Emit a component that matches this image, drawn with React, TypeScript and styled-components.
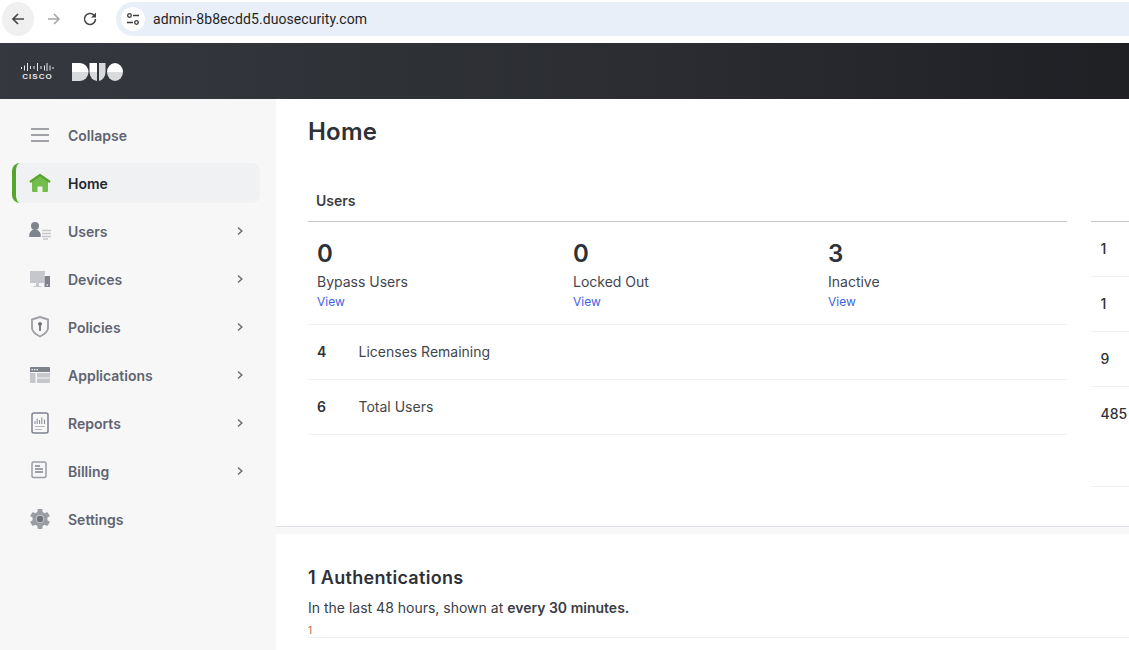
import React from "react";
import styled, { createGlobalStyle } from "styled-components";

const Global = createGlobalStyle`
  html, body { margin: 0; padding: 0; background: #fff; overflow: hidden; }
  body { font-family: Inter, "Liberation Sans", sans-serif; color: #2e3138; }
  * { box-sizing: border-box; }
`;

const Page = styled.div`
  width: 1129px;
  height: 650px;
  overflow: hidden;
  display: flex;
  flex-direction: column;
`;

const BrowserBar = styled.div`
  height: 43px;
  flex: none;
  display: flex;
  align-items: flex-start;
  padding: 2px 0 0 2px;
  background: #fff;
`;
const NavButton = styled.div<{ $active?: boolean }>`
  width: 32px;
  height: 34px;
  flex: none;
  margin-right: 4px;
  border-radius: 50%;
  display: flex;
  align-items: center;
  justify-content: center;
  background: ${(p) => (p.$active ? "#f0f0f1" : "transparent")};
`;
const UrlBar = styled.div`
  flex: 1;
  height: 34px;
  margin-left: 6px;
  border-radius: 17px 0 0 17px;
  background: #e9eff9;
  display: flex;
  align-items: center;
  padding-left: 5px;
`;
const TuneBadge = styled.div`
  width: 24px;
  height: 24px;
  border-radius: 50%;
  background: #fff;
  display: flex;
  align-items: center;
  justify-content: center;
`;
const UrlText = styled.span`
  margin-left: 8px;
  font: 14px "Roboto", "Liberation Sans", sans-serif;
  letter-spacing: 0.08px;
  color: #1f1f1f;
`;

const Header = styled.header`
  height: 56px;
  flex: none;
  background: linear-gradient(90deg, #35383e 0%, #2a2c31 60%, #1e2024 100%);
  display: flex;
  align-items: center;
  padding: 2px 0 0 21px;
  gap: 18px;
`;

const Body = styled.div`
  flex: 1;
  min-height: 0;
  display: flex;
`;

const Sidebar = styled.nav`
  width: 276px;
  flex: none;
  background: #f7f7f8;
  padding: 16px 16px 0 12px;
  display: flex;
  flex-direction: column;
`;
const NavItem = styled.div<{ $active?: boolean }>`
  height: 40px;
  flex: none;
  margin-bottom: 8px;
  display: flex;
  align-items: center;
  padding-left: ${(p) => (p.$active ? "12px" : "16px")};
  padding-right: 15px;
  border-radius: 8px;
  border-left: ${(p) => (p.$active ? "4px solid #56a52c" : "0")};
  background: ${(p) => (p.$active ? "#f0f1f3" : "transparent")};
`;
const IconSlot = styled.span`
  width: 24px;
  height: 24px;
  flex: none;
  display: flex;
`;
const NavLabel = styled.span<{ $active?: boolean }>`
  margin-left: 16px;
  flex: 1;
  font-size: 14px;
  font-weight: 600;
  color: ${(p) => (p.$active ? "#23262c" : "#5f6470")};
`;

const Main = styled.main`
  flex: 1;
  min-width: 0;
  background: #fff;
  display: flex;
  flex-direction: column;
`;
const TopSection = styled.section`
  height: 428px;
  flex: none;
  padding: 17px 0 0 32px;
  border-bottom: 1px solid #dfe2e8;
`;
const Title = styled.h1`
  margin: 0;
  font-size: 24px;
  line-height: 32px;
  font-weight: 600;
  letter-spacing: 0.2px;
  color: #2e3138;
`;
const Columns = styled.div`
  margin-top: 37px;
  display: flex;
  gap: 24px;
`;
const UsersPanel = styled.div`
  width: 759px;
  flex: none;
`;
const PanelHead = styled.div`
  height: 37px;
  padding: 0 0 5px 8px;
  display: flex;
  align-items: center;
  font-size: 14px;
  font-weight: 600;
  color: #3a3d44;
  border-bottom: 1px solid #c4c6ca;
`;
const StatGrid = styled.div`
  height: 103px;
  display: grid;
  grid-template-columns: 256px 255px 1fr;
  padding: 18px 0 0 9px;
  border-bottom: 1px solid #f2f2f3;
`;
const Stat = styled.div`
  display: flex;
  flex-direction: column;
`;
const StatValue = styled.div`
  font-size: 24px;
  line-height: 28px;
  font-weight: 600;
`;
const StatLabel = styled.div`
  margin-top: 4px;
  font-size: 14px;
  line-height: 20px;
  color: #43464d;
`;
const ViewLink = styled.a`
  font-size: 12px;
  line-height: 20px;
  color: #3f63e0;
`;
const CountRow = styled.div`
  height: 55px;
  display: flex;
  align-items: center;
  padding: 0 0 2px 9px;
  font-size: 14px;
  color: #43464d;
  border-bottom: 1px solid #f2f2f3;
`;
const CountValue = styled.span`
  width: 41.5px;
  font-weight: 600;
  font-size: 14px;
  color: #2e3138;
`;
const SidePanel = styled.div`
  flex: 1;
  margin-top: 36px;
  border-top: 1px solid #c4c6ca;
`;
const SideRow = styled.div<{ $tall?: boolean }>`
  height: ${(p) => (p.$tall ? "100px" : "55px")};
  padding: 18px 0 0 9.5px;
  font-size: 14px;
  line-height: 18px;
  font-weight: 500;
  color: #2e3138;
  border-bottom: 1px solid #f2f2f3;
`;
const Gutter = styled.div`
  height: 7px;
  flex: none;
  background: #f7f7f8;
`;
const AuthSection = styled.section`
  flex: 1;
  padding: 32px 0 0 32px;
`;
const AuthTitle = styled.h2`
  margin: 0;
  font-size: 18px;
  line-height: 24px;
  font-weight: 600;
  letter-spacing: 0.3px;
`;
const AuthText = styled.p`
  margin: 8px 0 0;
  font-size: 14px;
  line-height: 20px;
  color: #3a3d44;
  strong { font-weight: 600; }
`;
const AxisTick = styled.div`
  margin-top: 5px;
  height: 15px;
  font-size: 10px;
  line-height: 14px;
  color: #a06a4a;
  border-bottom: 1px solid #f2f2f3;
`;

const Chevron = () => (
  <svg width="10" height="10" viewBox="0 0 10 10" fill="none">
    <path d="M3 1.5 6.8 5 3 8.5" stroke="#6e727c" strokeWidth="1.6" />
  </svg>
);

const CiscoLogo = () => (
  <svg width="33" height="18" viewBox="0 0 33 18" fill="#e6e7e8">
    {[[0,4,2],[3,2.5,5],[6,0,8],[9,3,3],[12.5,3,3],[16,0,8],[19.5,3,3],[23,2.5,5],[25.5,0,8],[28.5,2.5,5],[31.5,4,2]].map(([x,y,h],i)=>(
      <rect key={i} x={x} y={y} width="1" height={h} />
    ))}
    <text x="16.5" y="16" textAnchor="middle" fontFamily="Liberation Sans" fontWeight="700" fontSize="8" letterSpacing="1">CISCO</text>
  </svg>
);

const DuoLogo = () => (
  <svg width="51" height="18" viewBox="0 0 51 18">
    <path d="M0 0h8a8.5 9 0 0 1 8.5 9H0z" fill="#fff" />
    <path d="M0 9h16.5A8.5 9 0 0 1 8 18H0z" fill="#d9dadc" />
    <path d="M17.5 0h7.5v9h-7.5z" fill="#fff" />
    <path d="M17.5 9h7.5v9A8 9 0 0 1 17.5 9z" fill="#d9dadc" />
    <path d="M27 0h6.5v9A8.5 9 0 0 1 27 18z" fill="#d9dadc" />
    <path d="M35 9a8 9 0 0 1 16 0z" fill="#fff" />
    <path d="M35 9h16a8 9 0 0 1-16 0z" fill="#d9dadc" />
  </svg>
);

const GEAR_TEETH = [0, 60, 120, 180, 240, 300];

const items: { label: string; icon: React.ReactNode; chevron?: boolean; active?: boolean }[] = [
  {
    label: "Collapse",
    icon: (
      <svg width="24" height="24" viewBox="0 0 24 24" fill="#a0a2a8">
        <rect x="3" y="5" width="18" height="2" />
        <rect x="3" y="11" width="18" height="2" />
        <rect x="3" y="17" width="18" height="2" />
      </svg>
    ),
  },
  {
    label: "Home",
    active: true,
    icon: (
      <svg width="24" height="24" viewBox="0 0 24 24">
        <path d="M4 8.5 12 3l8 5.5V20a1 1 0 0 1-1 1h-4.5v-5.5h-5V21H5a1 1 0 0 1-1-1z" fill="#73bd4d" />
        <path d="M2 11 12 4l10 7" fill="none" stroke="#56a52c" strokeWidth="2.2" />
      </svg>
    ),
  },
  {
    label: "Users",
    chevron: true,
    icon: (
      <svg width="24" height="24" viewBox="0 0 24 24">
        <circle cx="7" cy="7" r="4" fill="#7f838d" />
        <path d="M1.3 18v-2.5c0-2 1.5-3 3-4.5h5.4c1.5 1.5 3 2.5 3 4.5V18z" fill="#7f838d" />
        <path d="M14 11.5h9M14 14.5h9M14 17.5h9M15 20h5" stroke="#c5c7cc" strokeWidth="1.3" />
      </svg>
    ),
  },
  {
    label: "Devices",
    chevron: true,
    icon: (
      <svg width="24" height="24" viewBox="0 0 24 24">
        <path d="M2 4h15v12H2z" fill="#c5c7cc" />
        <path d="M8 16h3v3H8zM5.5 19h8v1h-8z" fill="#c5c7cc" />
        <path d="M16 8h6.5v12H16z" fill="#f7f7f8" />
        <path d="M16.5 9H22v11h-5.5z" fill="#7f838d" />
        <circle cx="19.2" cy="18" r=".8" fill="#f7f7f8" />
      </svg>
    ),
  },
  {
    label: "Policies",
    chevron: true,
    icon: (
      <svg width="24" height="24" viewBox="0 0 24 24">
        <path d="M4 4.5 12 2l8 2.5V13c0 4-5 7-8 8.5C9 20 4 17 4 13z" fill="none" stroke="#a0a2a8" strokeWidth="1.9" strokeLinejoin="round" />
        <circle cx="12" cy="9" r="2" fill="#6f737c" />
        <rect x="11.1" y="9" width="1.8" height="7" fill="#6f737c" />
      </svg>
    ),
  },
  {
    label: "Applications",
    chevron: true,
    icon: (
      <svg width="24" height="24" viewBox="0 0 24 24">
        <path d="M3 4h18a1 1 0 0 1 1 1v4H2V5a1 1 0 0 1 1-1z" fill="#7f838d" />
        <path d="M3.5 6H5v1.3H3.5zM6 6h1.5v1.3H6zM8.5 6H10v1.3H8.5z" fill="#ecedef" />
        <path d="M2 10h5.5v10H3a1 1 0 0 1-1-1zM9 10h13v4.5H9zM9 15.5h13V19a1 1 0 0 1-1 1H9z" fill="#c5c7cc" />
      </svg>
    ),
  },
  {
    label: "Reports",
    chevron: true,
    icon: (
      <svg width="24" height="24" viewBox="0 0 24 24" fill="none">
        <rect x="4" y="2" width="16" height="20" rx="2" stroke="#7f838d" strokeWidth="1.5" />
        <path d="M7 10v3M9.2 7.5V13M11.5 9v4M13.8 6.5V13M16.5 8.5V13" stroke="#8f929a" strokeWidth="1.1" />
        <path d="M7 15.5h10M7 18.5h7" stroke="#b5b7bc" strokeWidth="1.1" />
      </svg>
    ),
  },
  {
    label: "Billing",
    chevron: true,
    icon: (
      <svg width="24" height="24" viewBox="0 0 24 24" fill="none">
        <rect x="4" y="3" width="14" height="15.5" rx="1.5" stroke="#9a9da5" strokeWidth="1.5" />
        <path d="M7 7h5M7 10h8M7 13h8" stroke="#7f838d" strokeWidth="1.4" />
      </svg>
    ),
  },
  {
    label: "Settings",
    icon: (
      <svg width="24" height="24" viewBox="0 0 24 24">
        <circle cx="12" cy="12" r="7.5" fill="#9a9ca3" />
        {GEAR_TEETH.map((a) => (
          <rect key={a} x="9.5" y="2" width="5" height="5" rx="1" fill="#9a9ca3" transform={`rotate(${a} 12 12)`} />
        ))}
        <circle cx="12" cy="12" r="4.2" fill="#c9cace" />
        <circle cx="12" cy="12" r="3.2" fill="#6f737c" />
      </svg>
    ),
  },
];

export default function App() {
  return (
    <Page>
      <Global />
      <BrowserBar>
        <NavButton $active>
          <svg width="16" height="16" viewBox="0 0 16 16" fill="none">
            <path d="M14 8H3M8 3 3 8l5 5" stroke="#474747" strokeWidth="1.7" />
          </svg>
        </NavButton>
        <NavButton>
          <svg width="16" height="16" viewBox="0 0 16 16" fill="none">
            <path d="M2 8h11M8 3l5 5-5 5" stroke="#a5a5a5" strokeWidth="1.5" />
          </svg>
        </NavButton>
        <NavButton>
          <svg width="16" height="16" viewBox="0 0 16 16" fill="none">
            <path d="M13.5 8a5.5 5.5 0 1 1-1.6-3.9L13.5 6" stroke="#474747" strokeWidth="1.6" />
            <path d="M14 1.5v5H9z" fill="#474747" />
          </svg>
        </NavButton>
        <UrlBar>
          <TuneBadge>
            <svg width="14" height="14" viewBox="0 0 14 14" fill="none" stroke="#3c3c3c" strokeWidth="1.3">
              <circle cx="3.5" cy="3.5" r="1.8" />
              <path d="M7 3.5h6M1 10.5h6" />
              <circle cx="10.5" cy="10.5" r="1.8" />
            </svg>
          </TuneBadge>
          <UrlText>admin-8b8ecdd5.duosecurity.com</UrlText>
        </UrlBar>
      </BrowserBar>
      <Header>
        <CiscoLogo />
        <DuoLogo />
      </Header>
      <Body>
        <Sidebar>
          {items.map((it) => (
            <NavItem key={it.label} $active={it.active}>
              <IconSlot>{it.icon}</IconSlot>
              <NavLabel $active={it.active}>{it.label}</NavLabel>
              {it.chevron && <Chevron />}
            </NavItem>
          ))}
        </Sidebar>
        <Main>
          <TopSection>
            <Title>Home</Title>
            <Columns>
              <UsersPanel>
                <PanelHead>Users</PanelHead>
                <StatGrid>
                  <Stat>
                    <StatValue>0</StatValue>
                    <StatLabel>Bypass Users</StatLabel>
                    <ViewLink>View</ViewLink>
                  </Stat>
                  <Stat>
                    <StatValue>0</StatValue>
                    <StatLabel>Locked Out</StatLabel>
                    <ViewLink>View</ViewLink>
                  </Stat>
                  <Stat>
                    <StatValue>3</StatValue>
                    <StatLabel>Inactive</StatLabel>
                    <ViewLink>View</ViewLink>
                  </Stat>
                </StatGrid>
                <CountRow><CountValue>4</CountValue>Licenses Remaining</CountRow>
                <CountRow><CountValue>6</CountValue>Total Users</CountRow>
              </UsersPanel>
              <SidePanel>
                <SideRow>1</SideRow>
                <SideRow>1</SideRow>
                <SideRow>9</SideRow>
                <SideRow $tall>485</SideRow>
              </SidePanel>
            </Columns>
          </TopSection>
          <Gutter />
          <AuthSection>
            <AuthTitle>1 Authentications</AuthTitle>
            <AuthText>In the last 48 hours, shown at <strong>every 30 minutes.</strong></AuthText>
            <AxisTick>1</AxisTick>
          </AuthSection>
        </Main>
      </Body>
    </Page>
  );
}
